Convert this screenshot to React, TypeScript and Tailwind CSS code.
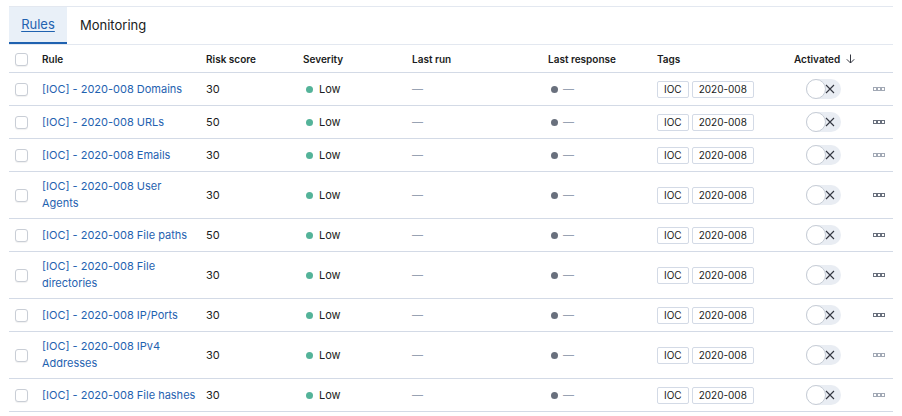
import React from 'react'

interface RuleRow {
  name: string
  risk: number
  dark?: boolean
}

const rows: RuleRow[] = [
  { name: '[IOC] - 2020-008 Domains', risk: 30 },
  { name: '[IOC] - 2020-008 URLs', risk: 50, dark: true },
  { name: '[IOC] - 2020-008 Emails', risk: 30 },
  { name: '[IOC] - 2020-008 User Agents', risk: 30, dark: true },
  { name: '[IOC] - 2020-008 File paths', risk: 50, dark: true },
  { name: '[IOC] - 2020-008 File directories', risk: 30, dark: true },
  { name: '[IOC] - 2020-008 IP/Ports', risk: 30, dark: true },
  { name: '[IOC] - 2020-008 IPv4 Addresses', risk: 30 },
  { name: '[IOC] - 2020-008 File hashes', risk: 30 },
]

const cols =
  'grid grid-cols-[33px_164px_97px_109px_136px_109px_137px_70px_29px] items-center'

function Checkbox() {
  return (
    <div className="w-[13px] h-[13px] rounded-[3px] border border-[#c9ced6] bg-white shadow-[0_1px_1px_rgba(0,0,0,0.06)]" />
  )
}

function Toggle() {
  return (
    <div className="relative w-[35px] h-[20px] rounded-full bg-[#e9edf3] flex items-center">
      <div className="absolute left-0 top-0 w-[20px] h-[20px] rounded-full bg-white border border-[#c6ccd5]" />
      <svg className="absolute right-[6px]" width="10" height="10" viewBox="0 0 10 10">
        <path d="M1 1L9 9M9 1L1 9" stroke="#343741" strokeWidth="1.1" />
      </svg>
    </div>
  )
}

function Boxes({ dark }: { dark?: boolean }) {
  const c = dark ? '#69707d' : '#a2a9b5'
  return (
    <svg width="12" height="4" viewBox="0 0 12 4">
      <rect x="0.5" y="0.5" width="3" height="3" fill="none" stroke={c} strokeWidth="1" />
      <rect x="4.5" y="0.5" width="3" height="3" fill="none" stroke={c} strokeWidth="1" />
      <rect x="8.5" y="0.5" width="3" height="3" fill="none" stroke={c} strokeWidth="1" />
    </svg>
  )
}

export default function App() {
  return (
    <div
      className="w-[902px] h-[416px] bg-white overflow-hidden pt-[6px] px-[9px] text-[#343741]"
      style={{ fontFamily: 'Inter, "Noto Sans", sans-serif' }}
    >
      <div className="w-[884px] border-t border-[#e3e8f0]">
        {/* Tabs */}
        <div className="flex h-[38px] border-b border-[#e3e8f0]">
          <div className="w-[58px] bg-[#e9f0f8] border-b-2 border-[#1f62b0] flex items-center justify-center pt-[1px]">
            <span className="text-[13px] text-[#1f62b0] underline underline-offset-2">Rules</span>
          </div>
          <div className="pl-[13px] flex items-center pt-[1px]">
            <span className="text-[13px] text-[#1a1c21]">Monitoring</span>
          </div>
        </div>

        {/* Header */}
        <div className={`${cols} h-[28px] pt-[1px] border-b border-[#d3dae6] text-[10px] font-semibold text-[#1a1c21]`}>
          <div className="pl-[6px]">
            <Checkbox />
          </div>
          <div>Rule</div>
          <div>Risk score</div>
          <div>Severity</div>
          <div>Last run</div>
          <div>Last response</div>
          <div>Tags</div>
          <div className="flex items-center gap-[6px]">
            Activated
            <svg width="9" height="10" viewBox="0 0 9 10">
              <path d="M4.5 0.5V9M0.8 5.3L4.5 9L8.2 5.3" fill="none" stroke="#343741" strokeWidth="1" />
            </svg>
          </div>
          <div />
        </div>

        {/* Rows */}
        {rows.map((r) => (
          <div
            key={r.name}
            className={`${cols} border-b border-[#d3dae6] py-[6px] text-[11px] leading-[17px]`}
          >
            <div className="pl-[6px]">
              <Checkbox />
            </div>
            <div className="pr-[8px] text-[#1f62b0]">{r.name}</div>
            <div className="text-[#1a1c21]">{r.risk}</div>
            <div className="flex items-center gap-[6px] pl-[3px] text-[#1a1c21]">
              <span className="w-[7px] h-[7px] rounded-full bg-[#54b399]" />
              Low
            </div>
            <div className="text-[#98a2b3]">—</div>
            <div className="flex items-center gap-[5px] pl-[3px] text-[#98a2b3]">
              <span className="w-[7px] h-[7px] rounded-full bg-[#69707d]" />—
            </div>
            <div className="flex items-center gap-[3px] text-[10px] text-[#1a1c21]">
              <span className="h-[17px] px-[6px] border border-[#d3dae6] rounded-[2px] leading-[15px]">IOC</span>
              <span className="h-[17px] px-[6px] border border-[#d3dae6] rounded-[2px] leading-[15px]">2020-008</span>
            </div>
            <div className="pl-[12px]">
              <Toggle />
            </div>
            <div className="flex justify-center">
              <Boxes dark={r.dark} />
            </div>
          </div>
        ))}
      </div>
    </div>
  )
}
